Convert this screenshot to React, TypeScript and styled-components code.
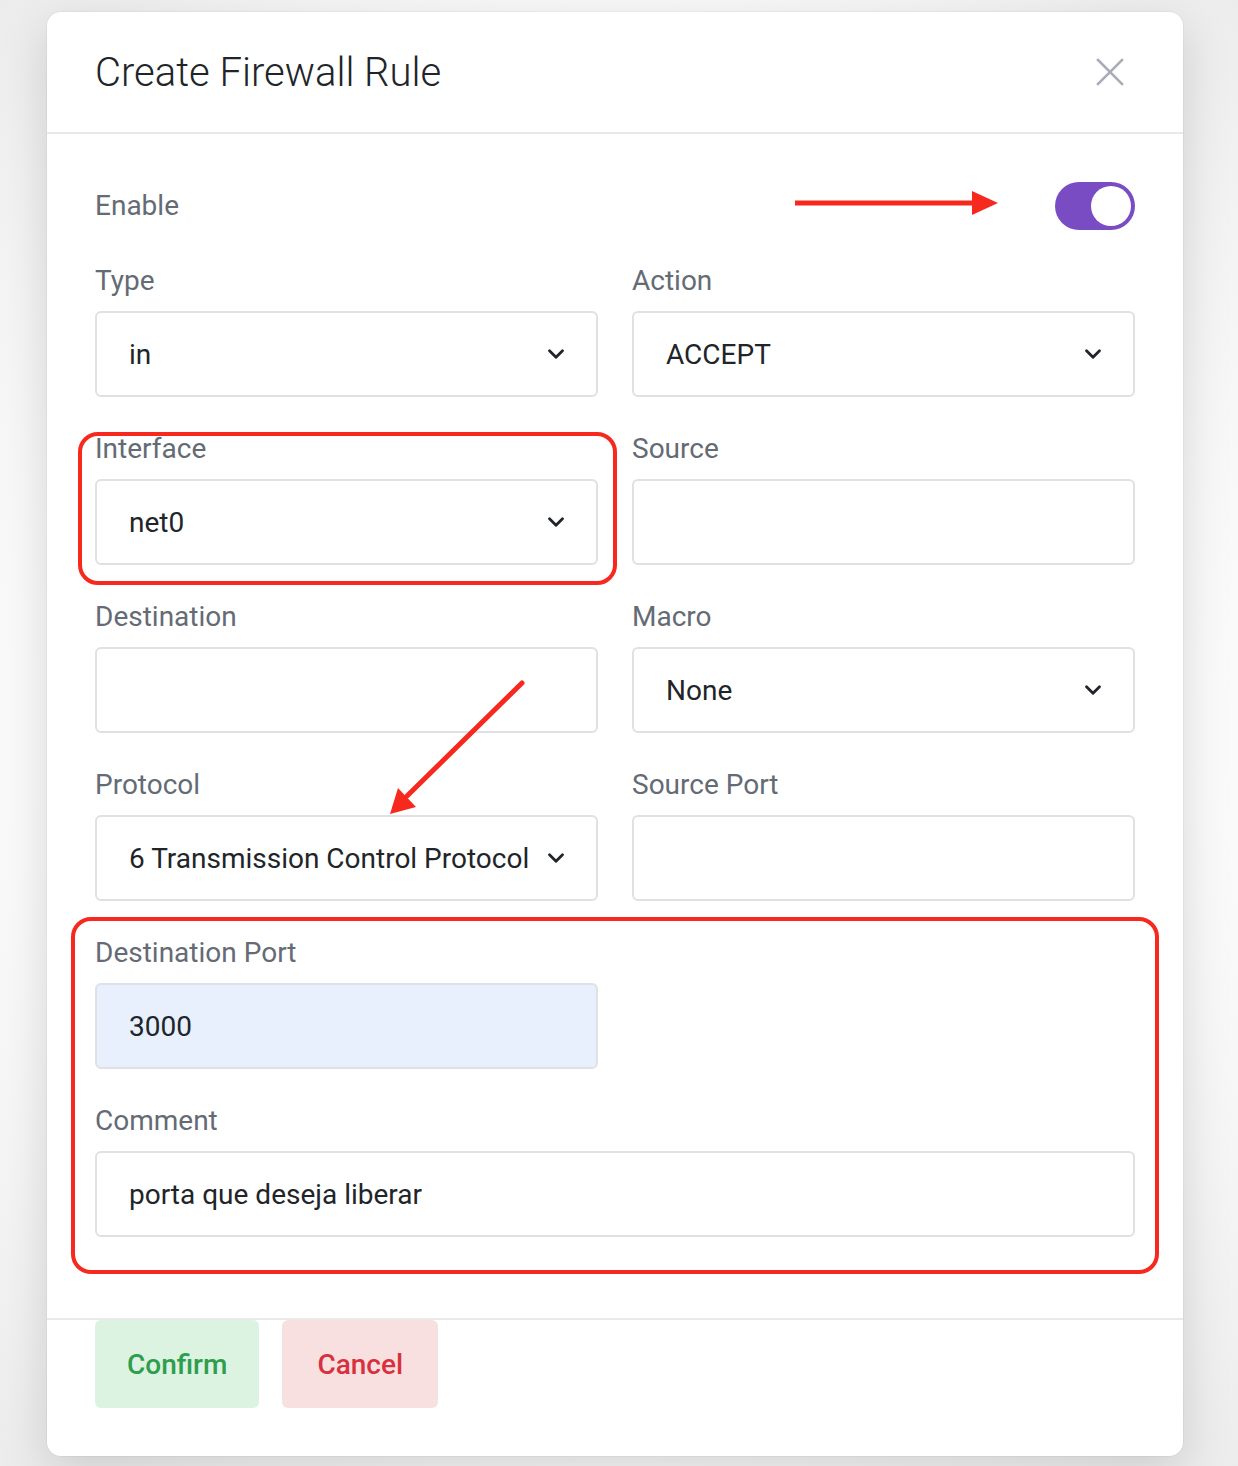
import { ChangeEvent, useState } from "react";
import styled, { createGlobalStyle } from "styled-components";

const GlobalStyle = createGlobalStyle`
    body {
        margin: 0;
        background: #f4f4f5;
        font-family: Roboto, "Liberation Sans", Arial, sans-serif;
    }
`

const Page = styled.div`
    width: 1238px;
    height: 1466px;
    padding: 12px 0 0 47px;
    box-sizing: border-box;
    background: radial-gradient(ellipse at center, #ffffff 60%, #ececec 100%);
    overflow: hidden;
`

const Modal = styled.div`
    position: relative;
    width: 1136px;
    background: #fff;
    border-radius: 14px;
    box-shadow: 0 14px 50px rgba(0, 0, 0, 0.16), 0 0 0 1px rgba(0, 0, 0, 0.03);
`

const Header = styled.div`
    height: 120px;
    display: flex;
    align-items: center;
    justify-content: space-between;
    padding: 0 48px 0 48px;
    border-bottom: 2px solid #e9e9ec;
`

const Title = styled.h2`
    margin: 0;
    font-size: 40px;
    font-weight: 300;
    color: #212529;
`

const CloseButton = styled.button`
    border: none;
    background: transparent;
    padding: 0;
    width: 34px;
    height: 34px;
    display: flex;
    align-items: center;
    justify-content: center;
    color: #a9abb8;
    cursor: pointer;
    margin-right: 8px;
`

const Body = styled.div`
    padding: 48px 48px 81px 48px;
`

const EnableRow = styled.div`
    display: flex;
    align-items: center;
    justify-content: space-between;
    height: 48px;
    margin-bottom: 36px;
`

const Grid = styled.div`
    display: grid;
    grid-template-columns: 503px 503px;
    column-gap: 34px;
    row-gap: 37px;
`

const Field = styled.div<{ $wide?: boolean }>`
    grid-column: ${p => (p.$wide ? "1 / span 2" : "auto")};
    display: flex;
    flex-direction: column;
`

const Label = styled.label<{ $inline?: boolean }>`
    font-size: 28px;
    line-height: 30px;
    color: #646b74;
    margin-bottom: ${p => (p.$inline ? "0" : "15px")};
`

const InputBoxInput = styled.input<{ $filled?: boolean }>`
    height: 86px;
    box-sizing: border-box;
    border: 2px solid #e0e0e5;
    border-radius: 6px;
    padding: 0 32px;
    font-family: inherit;
    font-size: 28px;
    color: #212529;
    background: ${p => (p.$filled ? "#e8f0fe" : "#fff")};
    outline: none;
`

const SelectBox = styled.div`
    height: 86px;
    box-sizing: border-box;
    border: 2px solid #e0e0e5;
    border-radius: 6px;
    padding: 0 27px 0 32px;
    display: flex;
    align-items: center;
    justify-content: space-between;
    font-size: 28px;
    color: #212529;
    background: #fff;
    cursor: pointer;
`

const Switch = styled.button<{ $on: boolean }>`
    width: 80px;
    height: 48px;
    border-radius: 24px;
    border: none;
    padding: 4px;
    background: ${p => (p.$on ? "#7a4cc4" : "#d0d0d6")};
    display: flex;
    justify-content: ${p => (p.$on ? "flex-end" : "flex-start")};
    cursor: pointer;
`

const Knob = styled.span`
    width: 40px;
    height: 40px;
    border-radius: 50%;
    background: #fff;
`

const Footer = styled.div`
    border-top: 2px solid #e9e9ec;
    padding: 0 48px 48px 48px;
    display: flex;
    gap: 23px;
`

const ActionButton = styled.button<{ $kind: "confirm" | "cancel" }>`
    height: 88px;
    padding: 0 ${p => (p.$kind === "confirm" ? 32 : 35)}px;
    border: none;
    border-radius: 6px;
    font-family: inherit;
    font-size: 28px;
    font-weight: 500;
    background: ${p => (p.$kind === "confirm" ? "#dcf3e2" : "#f8e0e1")};
    color: ${p => (p.$kind === "confirm" ? "#2e9e4c" : "#d9303e")};
    cursor: pointer;
`

const Highlight = styled.div<{ $left: number; $top: number; $w: number; $h: number }>`
    position: absolute;
    left: ${p => p.$left}px;
    top: ${p => p.$top}px;
    width: ${p => p.$w}px;
    height: ${p => p.$h}px;
    box-sizing: border-box;
    border: 4px solid #f7291f;
    border-radius: 20px;
    pointer-events: none;
`

const Annotations = styled.svg`
    position: absolute;
    left: 0;
    top: 0;
    pointer-events: none;
`

const Chevron = () => (
    <svg width="26" height="26" viewBox="0 0 24 24" fill="none" stroke="#212529" strokeWidth="2.6" strokeLinecap="round" strokeLinejoin="round">
        <polyline points="6 9 12 15 18 9" />
    </svg>
)

const Select = ({ value }: { value: string }) => (
    <SelectBox>
        <span>{value}</span>
        <Chevron />
    </SelectBox>
)

type RuleData = {
    source: string
    destination: string
    sourcePort: string
    destPort: string
    comment: string
}

const App = () => {
    const [enabled, setEnabled] = useState(true);
    const [rule, setRule] = useState<RuleData>({
        source: "",
        destination: "",
        sourcePort: "",
        destPort: "3000",
        comment: "porta que deseja liberar",
    });

    const onChange = (e: ChangeEvent<HTMLInputElement>) => {
        const { id, value } = e.target;
        setRule({ ...rule, [id]: value });
    }

    return (
        <>
            <GlobalStyle />
            <Page>
                <Modal>
                    <Header>
                        <Title>Create Firewall Rule</Title>
                        <CloseButton aria-label="close">
                            <svg width="30" height="30" viewBox="0 0 30 30" stroke="currentColor" strokeWidth="2.6" strokeLinecap="square">
                                <line x1="3" y1="3" x2="27" y2="27" />
                                <line x1="27" y1="3" x2="3" y2="27" />
                            </svg>
                        </CloseButton>
                    </Header>

                    <Body>
                        <EnableRow>
                            <Label as="span" $inline>Enable</Label>
                            <Switch $on={enabled} onClick={() => setEnabled(!enabled)}>
                                <Knob />
                            </Switch>
                        </EnableRow>

                        <Grid>
                            <Field>
                                <Label>Type</Label>
                                <Select value="in" />
                            </Field>
                            <Field>
                                <Label>Action</Label>
                                <Select value="ACCEPT" />
                            </Field>
                            <Field>
                                <Label>Interface</Label>
                                <Select value="net0" />
                            </Field>
                            <Field>
                                <Label>Source</Label>
                                <InputBoxInput id="source" value={rule.source} onChange={onChange} />
                            </Field>
                            <Field>
                                <Label>Destination</Label>
                                <InputBoxInput id="destination" value={rule.destination} onChange={onChange} />
                            </Field>
                            <Field>
                                <Label>Macro</Label>
                                <Select value="None" />
                            </Field>
                            <Field>
                                <Label>Protocol</Label>
                                <Select value="6 Transmission Control Protocol" />
                            </Field>
                            <Field>
                                <Label>Source Port</Label>
                                <InputBoxInput id="sourcePort" value={rule.sourcePort} onChange={onChange} />
                            </Field>
                            <Field>
                                <Label>Destination Port</Label>
                                <InputBoxInput id="destPort" $filled value={rule.destPort} onChange={onChange} />
                            </Field>
                            <Field />
                            <Field $wide>
                                <Label>Comment</Label>
                                <InputBoxInput id="comment" value={rule.comment} onChange={onChange} />
                            </Field>
                        </Grid>
                    </Body>

                    <Footer>
                        <ActionButton $kind="confirm">Confirm</ActionButton>
                        <ActionButton $kind="cancel">Cancel</ActionButton>
                    </Footer>

                    {/* red annotations drawn over the dialog */}
                    <Highlight $left={31} $top={420} $w={539} $h={153} />
                    <Highlight $left={24} $top={905} $w={1088} $h={357} />
                    <Annotations width="1136" height="1444" viewBox="0 0 1136 1444">
                        <line x1="748" y1="191" x2="930" y2="191" stroke="#f7291f" strokeWidth="5" />
                        <polygon points="925,179 951,191 925,203" fill="#f7291f" />
                        <line x1="475" y1="671" x2="360" y2="784" stroke="#f7291f" strokeWidth="5" strokeLinecap="round" />
                        <polygon points="343,802 351,776 369,795" fill="#f7291f" />
                    </Annotations>
                </Modal>
            </Page>
        </>
    )
}

export default App;
